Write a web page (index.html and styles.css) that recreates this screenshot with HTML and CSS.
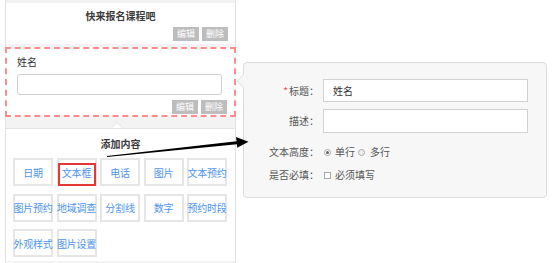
FILE: index.html
```html
<!DOCTYPE html>
<html lang="zh">
<head>
<meta charset="utf-8">
<title>表单编辑</title>
<link rel="stylesheet" href="styles.css">
</head>
<body>
<div class="page">
  <div class="left">
    <div class="head-block">
      <div class="head-title">快来报名课程吧</div>
      <div class="ops"><span class="op">编辑</span><span class="op">删除</span></div>
    </div>
    <div class="field-block">
      <div class="field-label">姓名</div>
      <div class="field-input"></div>
      <div class="ops"><span class="op">编辑</span><span class="op">删除</span></div>
    </div>
    <div class="add-block">
      <span class="notch"></span>
      <div class="add-title">添加内容</div>
      <div class="grid">
        <div class="cell">日期</div>
        <div class="cell">文本框<span class="mark"></span></div>
        <div class="cell">电话</div>
        <div class="cell">图片</div>
        <div class="cell">文本预约</div>
        <div class="cell">图片预约</div>
        <div class="cell">地域调查</div>
        <div class="cell">分割线</div>
        <div class="cell">数字</div>
        <div class="cell">预约时段</div>
        <div class="cell">外观样式</div>
        <div class="cell">图片设置</div>
      </div>
    </div>
  </div>
  <div class="pop">
    <span class="pop-arrow"></span>
    <div class="row">
      <div class="lbl"><span class="req">*</span>标题：</div>
      <div class="inp">姓名</div>
    </div>
    <div class="row row-desc">
      <div class="lbl">描述：</div>
      <div class="inp inp-tall"></div>
    </div>
    <div class="row row-radio">
      <div class="lbl">文本高度：</div>
      <span class="radio on"></span><span class="opt">单行</span>
      <span class="radio second"></span><span class="opt">多行</span>
    </div>
    <div class="row row-check">
      <div class="lbl">是否必填：</div>
      <span class="check"></span><span class="opt">必须填写</span>
    </div>
  </div>
</div>
<svg class="arrow" width="554" height="263" viewBox="0 0 554 263">
  <polygon points="107,156 236.6,141.2 236,137 248.5,141.8 237.2,147.8 236.9,144.3 107,156.9" fill="#000"/>
</svg>
</body>
</html>
```
FILE: styles.css
```css
* { box-sizing: border-box; }
html, body { margin: 0; padding: 0; background: #fff; }
body {
  font-family: "Noto Sans CJK SC", "Noto Sans", sans-serif;
  font-size: 10px;
  color: #444;
  width: 554px;
  height: 263px;
  overflow: hidden;
  position: relative;
}
.page {
  display: flex;
  align-items: flex-start;
}
.left {
  margin-left: 5px;
  width: 231px;
  height: 263px;
  border-left: 1px solid #e2e2e2;
  border-right: 1px solid #e2e2e2;
  background: #f3f3f3;
  padding-top: 3px;
  display: flex;
  flex-direction: column;
}
.head-block {
  background: #fff;
  height: 41px;
  padding-top: 5px;
}
.head-title {
  text-align: center;
  font-weight: bold;
  color: #3a3a3a;
  font-size: 10px;
  line-height: 16px;
}
.ops {
  display: flex;
  justify-content: flex-end;
  gap: 3px;
  padding-right: 7px;
  margin-top: 3px;
}
.op {
  display: block;
  width: 26px;
  height: 14px;
  line-height: 14px;
  text-align: center;
  background: #bdbdbd;
  color: #fff;
  font-size: 9px;
}
.field-block {
  margin: 3px -1px 0;
  height: 70px;
  background: #fff;
  border: 2px dashed #ff8c8c;
  padding: 6px 7px 0 10px;
}
.field-label {
  line-height: 14px;
  font-size: 10px;
  color: #333;
}
.field-input {
  margin-top: 5px;
  width: 205px;
  height: 21px;
  border: 1px solid #cfcfcf;
  border-radius: 3px;
  background: #fff;
}
.field-block .ops {
  margin-top: 5px;
  padding-right: 0;
}
.add-block {
  position: relative;
  margin-top: 11px;
  flex: 1;
  margin-bottom: 2px;
  background: #fff;
  border-top: 1px solid #e2e2e2;
  padding: 7px 0 0 7px;
}
.notch {
  position: absolute;
  left: 105px;
  top: -7px;
  width: 0;
  height: 0;
  border-left: 6px solid transparent;
  border-right: 6px solid transparent;
  border-bottom: 6px solid #e2e2e2;
}
.notch::after {
  content: "";
  position: absolute;
  left: -5px;
  top: 1px;
  border-left: 5px solid transparent;
  border-right: 5px solid transparent;
  border-bottom: 5px solid #fff;
}
.add-title {
  text-align: center;
  font-weight: bold;
  color: #3a3a3a;
  line-height: 16px;
  margin-left: -7px;
}
.grid {
  margin-top: 6px;
  display: grid;
  grid-template-columns: repeat(5, 40px);
  grid-auto-rows: 28px;
  column-gap: 3.5px;
  row-gap: 7.5px;
}
.cell {
  position: relative;
  border: 2px solid #e6e6e6;
  color: #4d94ee;
  font-size: 10px;
  display: flex;
  align-items: center;
  justify-content: center;
  white-space: nowrap;
  letter-spacing: -0.2px;
}
.mark {
  position: absolute;
  left: -1px;
  top: 3px;
  width: 38px;
  height: 23px;
  border: 2px solid #e53535;
}
.pop {
  position: relative;
  margin-left: 7px;
  margin-top: 62px;
  width: 304px;
  height: 136px;
  background: #f7f7f7;
  border: 1px solid #dcdcdc;
  border-radius: 4px;
  padding-top: 16px;
}
.pop-arrow {
  position: absolute;
  left: -7px;
  top: 10px;
  width: 0;
  height: 0;
  border-top: 8px solid transparent;
  border-bottom: 8px solid transparent;
  border-right: 7px solid #dcdcdc;
}
.pop-arrow::after {
  content: "";
  position: absolute;
  left: 1px;
  top: -7px;
  border-top: 7px solid transparent;
  border-bottom: 7px solid transparent;
  border-right: 6px solid #f7f7f7;
}
.row {
  display: flex;
  align-items: center;
}
.lbl {
  width: 75px;
  margin-right: 4px;
  text-align: right;
  color: #555;
  font-size: 10px;
  line-height: 16px;
}
.req {
  color: #f04848;
  margin-right: 1px;
}
.inp {
  width: 205px;
  height: 23px;
  background: #fff;
  border: 1px solid #d2d2d2;
  padding-left: 9px;
  line-height: 21px;
  color: #333;
  font-size: 10px;
}
.row-desc { margin-top: 7px; }
.inp-tall { height: 24px; }
.row-radio { margin-top: 11px; height: 16px; }
.row-check { margin-top: 7px; height: 16px; }
.radio {
  display: inline-block;
  width: 7px;
  height: 7px;
  border: 1px solid #aaa;
  border-radius: 50%;
  background: #fff;
  margin-left: 1px;
  margin-right: 4px;
  position: relative;
}
.radio.on::after {
  content: "";
  position: absolute;
  left: 1px;
  top: 1px;
  width: 3px;
  height: 3px;
  border-radius: 50%;
  background: #666;
}
.radio.second { margin-left: 3px; margin-right: 5px; background: #eee; }
.check {
  display: inline-block;
  width: 7px;
  height: 7px;
  border: 1px solid #aaa;
  background: #fff;
  margin-left: 1px;
  margin-right: 4px;
}
.opt {
  color: #555;
  font-size: 10px;
  line-height: 16px;
}
.arrow {
  position: absolute;
  left: 0;
  top: 0;
  pointer-events: none;
}
```
